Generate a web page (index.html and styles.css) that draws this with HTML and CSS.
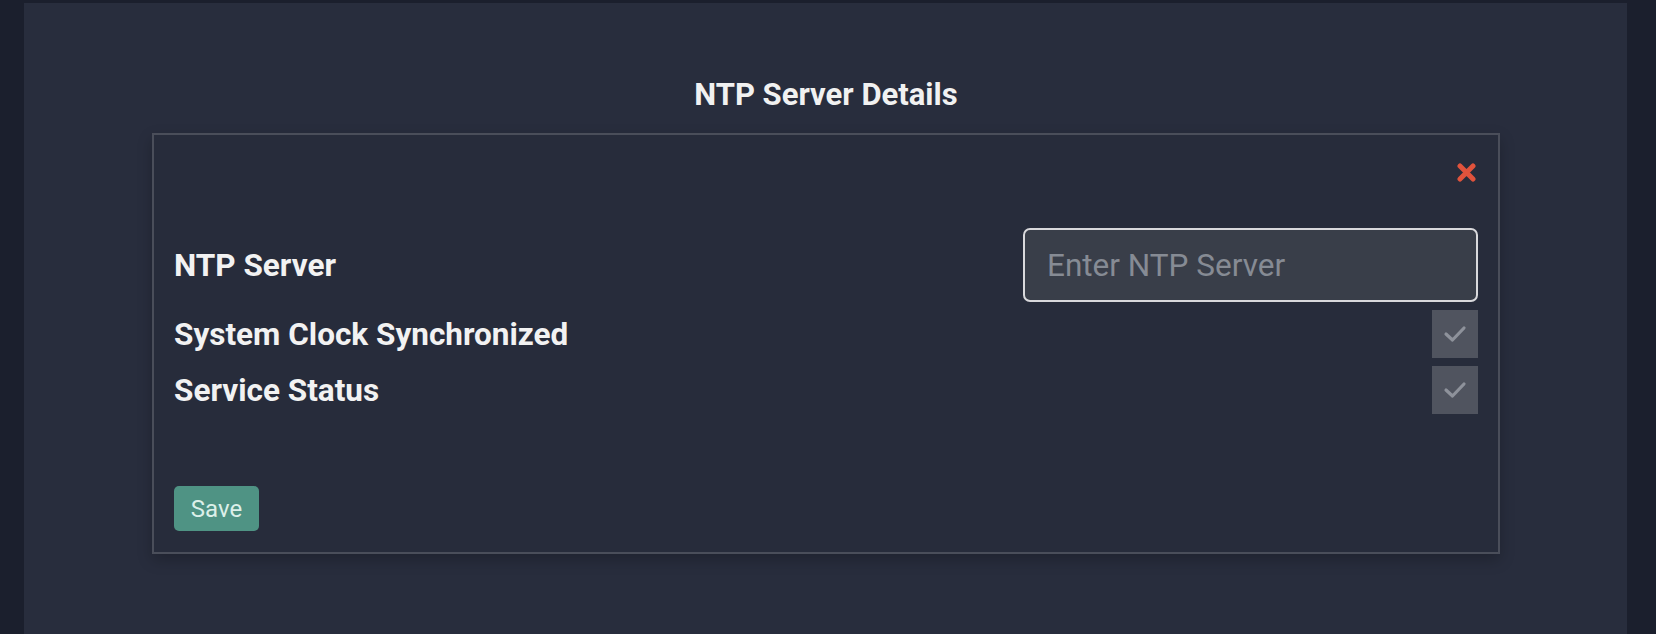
FILE: index.html
```html
<!DOCTYPE html>
<html>
<head>
<meta charset="utf-8">
<link rel="stylesheet" href="styles.css">
</head>
<body>
<div class="frame">
  <main class="panel">
    <h1 class="title">NTP Server Details</h1>
    <section class="card">
      <div class="card-top">
        <button class="close" aria-label="Close">
          <svg width="19" height="19" viewBox="0 0 19 19"><path d="M3 3 L16 16 M16 3 L3 16" stroke="#e0533c" stroke-width="5" stroke-linecap="round"/></svg>
        </button>
      </div>
      <div class="rows">
        <div class="row row-input">
          <label class="label">NTP Server</label>
          <input class="field" type="text" placeholder="Enter NTP Server">
        </div>
        <div class="row">
          <span class="label">System Clock Synchronized</span>
          <span class="check"><svg width="24" height="18" viewBox="0 0 24 18"><path d="M3 9 L9.5 15 L21 3" fill="none" stroke="#8e929b" stroke-width="3.2" stroke-linecap="round" stroke-linejoin="round"/></svg></span>
        </div>
        <div class="row">
          <span class="label">Service Status</span>
          <span class="check"><svg width="24" height="18" viewBox="0 0 24 18"><path d="M3 9 L9.5 15 L21 3" fill="none" stroke="#8e929b" stroke-width="3.2" stroke-linecap="round" stroke-linejoin="round"/></svg></span>
        </div>
      </div>
      <div class="actions">
        <button class="save">Save</button>
      </div>
    </section>
  </main>
</div>
</body>
</html>
```

FILE: styles.css
```css
html, body {
  margin: 0;
  padding: 0;
  height: 100%;
}
body {
  background: #1b1f2d;
  font-family: Roboto, "Liberation Sans", sans-serif;
  overflow: hidden;
}
.frame {
  display: flex;
  height: 100%;
  padding: 3px 29px 0 24px;
  box-sizing: border-box;
}
.panel {
  flex: 1;
  background: #282d3d;
  padding: 74px 127px 0 128px;
  display: flex;
  flex-direction: column;
}
.title {
  margin: 0 0 21px;
  text-align: center;
  color: #f1f1f1;
  font-size: 31px;
  font-weight: 700;
  line-height: 35px;
}
.card {
  border: 2px solid #4a4e5a;
  background: #272c3b;
  box-shadow: 0 6px 14px rgba(0, 0, 0, 0.22);
  padding: 28px 20px 21px 20px;
  display: flex;
  flex-direction: column;
}
.card-top {
  display: flex;
  justify-content: flex-end;
  padding-right: 2px;
}
.close {
  background: none;
  border: 0;
  padding: 0;
  width: 19px;
  height: 19px;
  display: block;
}
.close svg { display: block; }
.rows {
  margin-top: 46px;
  display: flex;
  flex-direction: column;
  gap: 8px;
}
.row {
  display: flex;
  align-items: center;
  justify-content: space-between;
}
.label {
  color: #f2f2f2;
  font-size: 31.5px;
  font-weight: 700;
  line-height: 35px;
}
.field {
  width: 455px;
  height: 74px;
  box-sizing: border-box;
  border: 2px solid #d9d9dc;
  border-radius: 7px;
  background: #393e49;
  padding: 0 22px;
  font-family: Roboto, "Liberation Sans", sans-serif;
  font-size: 31.5px;
  color: #e0e0e0;
  outline: none;
}
.field::placeholder {
  color: #868b94;
}
.check {
  width: 46px;
  height: 48px;
  background: #50545f;
  display: flex;
  align-items: center;
  justify-content: center;
}
.check svg { display: block; }
.actions {
  margin-top: 72px;
  display: flex;
}
.save {
  width: 85px;
  height: 45px;
  border: 0;
  border-radius: 5px;
  background: #4f9384;
  color: #dcefe9;
  font-family: Roboto, "Liberation Sans", sans-serif;
  font-size: 24px;
  padding: 0;
}
```
